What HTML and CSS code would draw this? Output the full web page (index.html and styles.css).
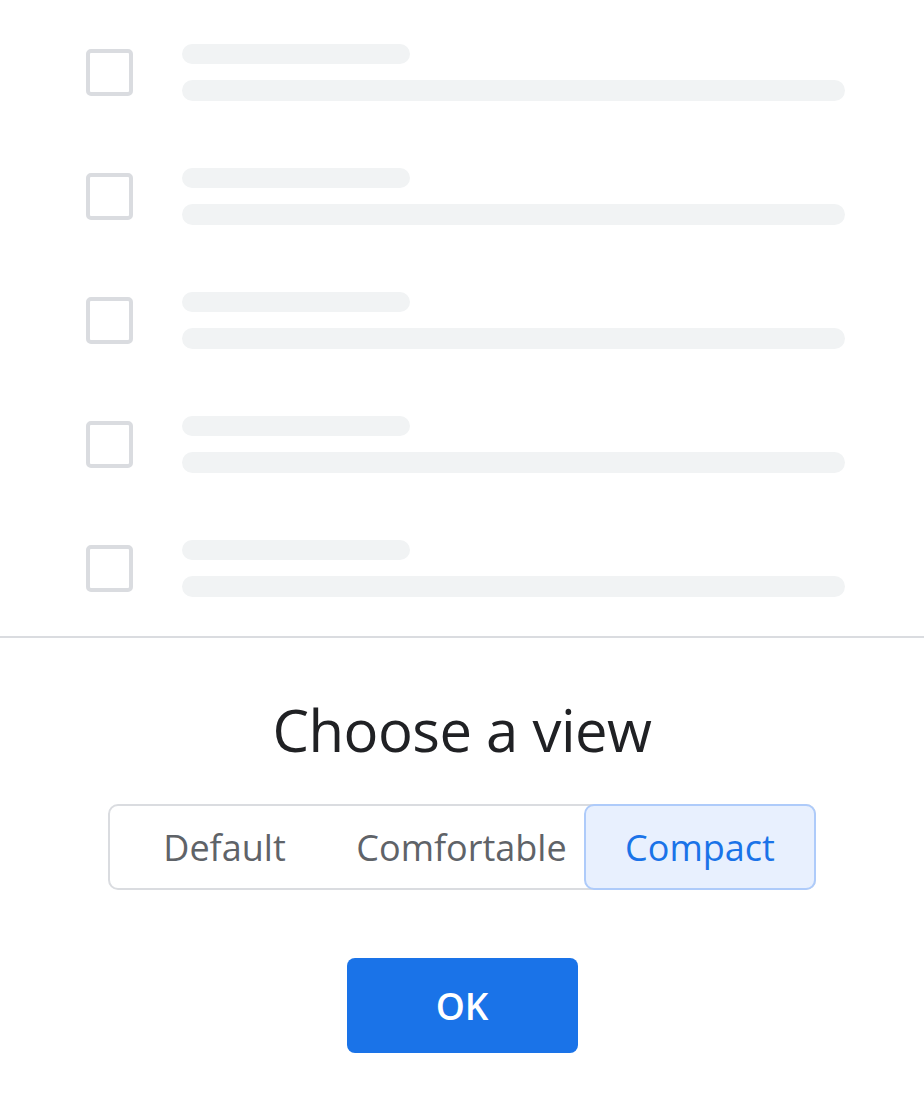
FILE: index.html
```html
<!DOCTYPE html>
<html>
<head>
<meta charset="utf-8">
<link rel="stylesheet" href="styles.css">
</head>
<body>
<div class="preview">
  <div class="row"><div class="check"></div><div class="lines"><div class="bar short"></div><div class="bar long"></div></div></div>
  <div class="row"><div class="check"></div><div class="lines"><div class="bar short"></div><div class="bar long"></div></div></div>
  <div class="row"><div class="check"></div><div class="lines"><div class="bar short"></div><div class="bar long"></div></div></div>
  <div class="row"><div class="check"></div><div class="lines"><div class="bar short"></div><div class="bar long"></div></div></div>
  <div class="row"><div class="check"></div><div class="lines"><div class="bar short"></div><div class="bar long"></div></div></div>
</div>
<div class="divider"></div>
<div class="dialog">
  <h1 class="title">Choose a view</h1>
  <div class="segments">
    <div class="seg">Default</div>
    <div class="seg">Comfortable</div>
    <div class="seg active">Compact</div>
  </div>
  <button class="ok">OK</button>
</div>
</body>
</html>
```
FILE: styles.css
```css
html, body {
  margin: 0;
  padding: 0;
  background: #ffffff;
}
body {
  width: 924px;
  height: 1101px;
  overflow: hidden;
  font-family: "Open Sans", "Liberation Sans", sans-serif;
}
.preview {
  display: flex;
  flex-direction: column;
  gap: 67px;
  padding: 44px 79px 39px 86px;
}
.row {
  display: flex;
  align-items: center;
  gap: 49px;
}
.check {
  width: 39px;
  height: 39px;
  border: 4px solid #dadce0;
  border-radius: 5px;
  flex: none;
}
.lines {
  flex: 1;
  display: flex;
  flex-direction: column;
  gap: 16px;
}
.bar {
  background: #f1f3f4;
  border-radius: 11px;
}
.bar.short {
  width: 228px;
  height: 20px;
}
.bar.long {
  height: 21px;
}
.divider {
  height: 2px;
  background: #dadce0;
}
.dialog {
  display: flex;
  flex-direction: column;
  align-items: center;
}
.title {
  margin: 52px 0 0;
  font-size: 58px;
  font-weight: 400;
  color: #202124;
  line-height: 80px;
  letter-spacing: -0.5px;
}
.segments {
  margin-top: 34px;
  width: 704px;
  height: 82px;
  border: 2px solid #dadce0;
  border-radius: 10px;
  display: grid;
  grid-template-columns: 229px 245px 1fr;
}
.seg {
  display: flex;
  align-items: center;
  justify-content: center;
  font-size: 36px;
  color: #5f6368;
}
.seg.active {
  margin: -2px -2px -2px 0;
  border: 2px solid #aecbfa;
  border-radius: 10px;
  background: #e8f0fe;
  color: #1a73e8;
}
.ok {
  margin-top: 68px;
  width: 231px;
  height: 95px;
  border: none;
  border-radius: 8px;
  background: #1a73e8;
  color: #ffffff;
  font-family: "Open Sans", "Liberation Sans", sans-serif;
  font-size: 37px;
  font-weight: 600;
}
```
